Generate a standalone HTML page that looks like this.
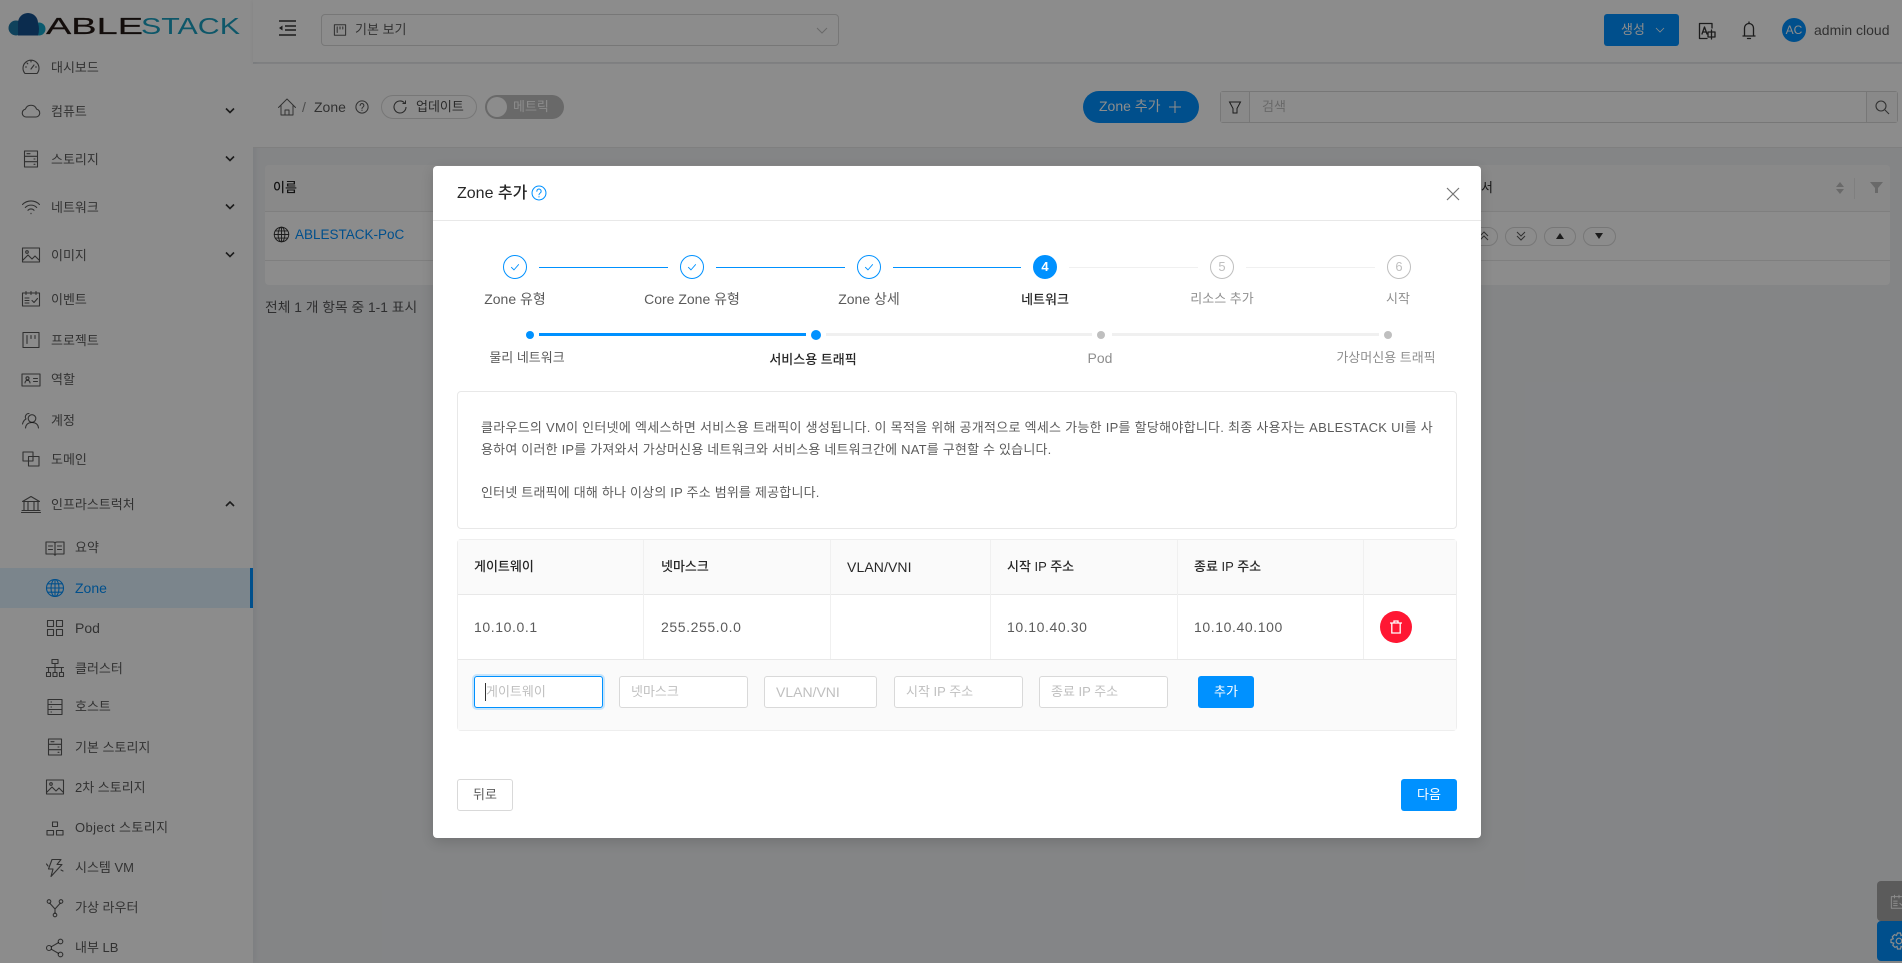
<!DOCTYPE html>
<html lang="ko"><head><meta charset="utf-8"><title>Zone</title>
<style>
*{box-sizing:border-box}
html,body{margin:0;padding:0;width:1902px;height:963px;overflow:hidden;background:#f0f2f5;font-family:"Liberation Sans","Noto Sans CJK KR",sans-serif;font-size:13px;color:rgba(0,0,0,.65)}
.a,.ic{position:absolute}
.a{white-space:nowrap}
.t{position:absolute;white-space:nowrap;line-height:22px;height:22px}
.c{transform:translateX(-50%)}
.ic{width:20px;height:20px;fill:none;stroke:currentColor;stroke-width:1.1;stroke-linecap:round;stroke-linejoin:round;overflow:visible}
.b{position:absolute;background:#fff}
.inp{position:absolute;top:676px;height:32px;border:1px solid #d9d9d9;border-radius:3px;background:#fff;color:#bfbfbf;line-height:30px;padding-left:11px;white-space:nowrap}
.step{position:absolute;top:255px;width:24px;height:24px;border-radius:50%;border:1px solid #0091ff}
.ln{position:absolute;top:267px;height:1px;background:#0091ff}
.gl{background:#f0f0f0}
.dot{position:absolute;border-radius:50%;background:#0091ff}
.v{position:absolute;width:1px;background:#f0f0f0}
.pill{position:absolute;top:227px;height:19px;border:1px solid #d9d9d9;border-radius:10px;background:#fff}
.n{font-size:14px;letter-spacing:.6px}
</style></head><body>
<svg width="0" height="0" style="position:absolute"><defs>
<symbol id="dash" viewBox="0 0 20 20"><path d="M4 16.500a8 8 0 1 1 12 0zM10 12l3-4M4.500 10h1M14.500 10h1M6 6l.8.8M10 4v1"/></symbol>
<symbol id="cloud" viewBox="0 0 20 20"><path d="M5 16a4 4 0 0 1-.6-7.900A6 6 0 0 1 15.600 8.100 4 4 0 0 1 15 16z"/></symbol>
<symbol id="stor" viewBox="0 0 20 20"><path d="M3.500 2h13v16h-13zM3.500 7.300h13M3.500 12.700h13M6 4.700h3M13 10h1M13 15.300h1"/></symbol>
<symbol id="wifi" viewBox="0 0 20 20"><path d="M1.500 7.500a12 12 0 0 1 17 0M4.300 10.500a8 8 0 0 1 11.400 0M7 13.300a4 4 0 0 1 6 0M10 16.300v.4"/></symbol>
<symbol id="img" viewBox="0 0 20 20"><path d="M1.500 3h17v14h-17zM2 15l5-5 4 4 3-3 4 4"/><circle cx="6" cy="7" r="1.300"/></symbol>
<symbol id="cal" viewBox="0 0 20 20"><path d="M1.500 4h17v13h-17zM5 2.500v3M10 2.500v3M15 2.500v3M4 9h4M4 11.500h4M4 14h4M11 11.500l2 2 3.500-4"/></symbol>
<symbol id="proj" viewBox="0 0 20 20"><path d="M2 2.500h16v15H2zM6 5.500v8M10 5.500v3M14 5.500v3"/></symbol>
<symbol id="idc" viewBox="0 0 20 20"><path d="M1 4h18v12H1zM12.500 8.500h4M12.500 11.500h4M4 13c.3-3.500 4.700-3.500 5 0"/><circle cx="6.500" cy="8.300" r="1.500"/></symbol>
<symbol id="team" viewBox="0 0 20 20"><circle cx="11" cy="8.500" r="3.800"/><path d="M4.500 18c.5-4 3-5.500 6.500-5.500s6 1.500 6.500 5.500M8 3.500A3.500 3.500 0 0 0 5 9c-2 1-3 3-3.500 5"/></symbol>
<symbol id="dom" viewBox="0 0 20 20"><path d="M2 3h10v9H2zM7.500 7.500H18V17H7.500zM12 7.500V12H7.500"/></symbol>
<symbol id="bank" viewBox="0 0 20 20"><path d="M1.500 7.500L10 2.500l8.500 5zM3 7.500V16M7 7.500V16M13 7.500V16M17 7.500V16M1 16.500h18M.5 18.500h19"/></symbol>
<symbol id="book" viewBox="0 0 20 20"><path d="M1 4h7c1 0 2 .5 2 1.500C10 4.500 11 4 12 4h7v12h-7c-1 0-2 .5-2 1.500 0-1-1-1.500-2-1.500H1zM10 5.500v12M3.500 8h4M3.500 11.500h4M12.500 8h4M12.500 11.500h4"/></symbol>
<symbol id="globe" viewBox="0 0 20 20"><circle cx="10" cy="10" r="8.500"/><ellipse cx="10" cy="10" rx="4" ry="8.500"/><path d="M10 1.500v17M1.500 10h17M2.700 5.800h14.600M2.700 14.200h14.600"/></symbol>
<symbol id="grid" viewBox="0 0 20 20"><path d="M2.500 2.500h6v6h-6zM11.500 2.500h6v6h-6zM2.500 11.500h6v6h-6zM11.500 11.500h6v6h-6z"/></symbol>
<symbol id="clu" viewBox="0 0 20 20"><path d="M7 1.500h6v4H7zM1.500 14.500h4v4h-4zM8 14.500h4v4H8zM14.500 14.500h4v4h-4zM1.500 9.500h17M3.500 14.500V9.500M10 5.500v9M16.500 14.500V9.500"/></symbol>
<symbol id="host" viewBox="0 0 20 20"><path d="M3 2.500h14v15H3zM3 7.500h14M3 12.500h14M6 5h.5M6 10h.5M6 15h.5"/></symbol>
<symbol id="obj" viewBox="0 0 20 20"><path d="M7.500 4h5v4.500h-5zM2 12.500h6.500V17H2zM11.500 12.500H18V17h-6.500z"/></symbol>
<symbol id="bolt" viewBox="0 0 20 20"><path d="M7 1.500h9l-4 5h5L6 18.500l2-7.500H3.500zM3 8L1.500 6M16 12l2 1"/></symbol>
<symbol id="fork" viewBox="0 0 20 20"><circle cx="4" cy="3.500" r="1.800"/><circle cx="16" cy="3.500" r="1.800"/><circle cx="10" cy="17" r="1.800"/><path d="M4.800 5.200L10 11l5.200-5.800M10 11v4.200"/></symbol>
<symbol id="share" viewBox="0 0 20 20"><circle cx="4" cy="10" r="2.500"/><circle cx="15.500" cy="3.500" r="2.300"/><circle cx="15.500" cy="16.500" r="2.300"/><path d="M6.200 8.800l7.300-4.200M6.200 11.200l7.300 4.200"/></symbol>
<symbol id="chk" viewBox="0 0 20 20"><path d="M4 10.500l4.300 4.300L16 6"/></symbol>
<symbol id="q" viewBox="0 0 20 20"><circle cx="10" cy="10" r="8.700"/><path d="M7.300 7.800a2.700 2.700 0 1 1 4.200 2.200c-1 .7-1.500 1.100-1.500 2.200M10 14.500v.5"/></symbol>
</defs></svg>

<!-- sidebar -->
<div class="b" style="left:0;top:0;width:253px;height:963px;box-shadow:2px 0 6px rgba(0,21,41,.06)"></div>
<svg class="a" style="left:8px;top:12px" width="240" height="26" viewBox="0 0 240 26">
<circle cx="8" cy="16" r="7.500" fill="#1d79a8"/><circle cx="31" cy="17" r="6.500" fill="#13a5c8"/><path d="M10 23.500V11a10 10 0 0 1 20 0q2 6 0 12.500z" fill="#14508f"/>
<text x="38" y="22" font-family="Liberation Sans" font-size="23.500" textLength="97" lengthAdjust="spacingAndGlyphs" fill="#231815" stroke="#231815" stroke-width=".2">ABLE</text>
<text x="133" y="22" font-family="Liberation Sans" font-size="23.500" textLength="99" lengthAdjust="spacingAndGlyphs" fill="#1b9fc0">STACK</text></svg>

<svg class="ic" style="left:21px;top:57px;color:#595959"><use href="#dash"/></svg><span class="t" style="left:51px;top:57px">대시보드</span>
<svg class="ic" style="left:21px;top:101px"><use href="#cloud"/></svg><span class="t" style="left:51px;top:101px">컴퓨트</span>
<svg class="ic" style="left:21px;top:149px"><use href="#stor"/></svg><span class="t" style="left:51px;top:149px">스토리지</span>
<svg class="ic" style="left:21px;top:197px"><use href="#wifi"/></svg><span class="t" style="left:51px;top:197px">네트워크</span>
<svg class="ic" style="left:21px;top:245px"><use href="#img"/></svg><span class="t" style="left:51px;top:245px">이미지</span>
<svg class="ic" style="left:21px;top:289px"><use href="#cal"/></svg><span class="t" style="left:51px;top:289px">이벤트</span>
<svg class="ic" style="left:21px;top:330px"><use href="#proj"/></svg><span class="t" style="left:51px;top:330px">프로젝트</span>
<svg class="ic" style="left:21px;top:370px"><use href="#idc"/></svg><span class="t" style="left:51px;top:369px">역할</span>
<svg class="ic" style="left:21px;top:410px"><use href="#team"/></svg><span class="t" style="left:51px;top:410px">계정</span>
<svg class="ic" style="left:21px;top:449px"><use href="#dom"/></svg><span class="t" style="left:51px;top:449px">도메인</span>
<svg class="ic" style="left:21px;top:494px"><use href="#bank"/></svg><span class="t" style="left:51px;top:494px">인프라스트럭처</span>
<svg class="a" style="left:225px;top:107px" width="10" height="8" fill="none" stroke="#333" stroke-width="1.600"><path d="M1 1.500l4 4 4-4"/></svg>
<svg class="a" style="left:225px;top:155px" width="10" height="8" fill="none" stroke="#333" stroke-width="1.600"><path d="M1 1.500l4 4 4-4"/></svg>
<svg class="a" style="left:225px;top:203px" width="10" height="8" fill="none" stroke="#333" stroke-width="1.600"><path d="M1 1.500l4 4 4-4"/></svg>
<svg class="a" style="left:225px;top:251px" width="10" height="8" fill="none" stroke="#333" stroke-width="1.600"><path d="M1 1.500l4 4 4-4"/></svg>
<svg class="a" style="left:225px;top:500px" width="10" height="8" fill="none" stroke="#333" stroke-width="1.600"><path d="M1 6l4-4 4 4"/></svg>

<div class="b" style="left:0;top:568px;width:253px;height:40px;background:#e0f3ff;border-right:3px solid #0091ff"></div>
<svg class="ic" style="left:45px;top:538px"><use href="#book"/></svg><span class="t" style="left:75px;top:537px">요약</span>
<svg class="ic" style="left:45px;top:578px;color:#0091ff"><use href="#globe"/></svg><span class="t" style="left:75px;top:577px;color:#0091ff;font-size:14px">Zone</span>
<svg class="ic" style="left:45px;top:618px"><use href="#grid"/></svg><span class="t" style="left:75px;top:617px;font-size:14px">Pod</span>
<svg class="ic" style="left:45px;top:658px"><use href="#clu"/></svg><span class="t" style="left:75px;top:658px">클러스터</span>
<svg class="ic" style="left:45px;top:697px"><use href="#host"/></svg><span class="t" style="left:75px;top:696px">호스트</span>
<svg class="ic" style="left:45px;top:737px"><use href="#stor"/></svg><span class="t" style="left:75px;top:737px">기본 스토리지</span>
<svg class="ic" style="left:45px;top:777px"><use href="#img"/></svg><span class="t" style="left:75px;top:777px">2차 스토리지</span>
<svg class="ic" style="left:45px;top:818px"><use href="#obj"/></svg><span class="t" style="left:75px;top:817px;letter-spacing:.4px">Object 스토리지</span>
<svg class="ic" style="left:45px;top:858px"><use href="#bolt"/></svg><span class="t" style="left:75px;top:857px">시스템 VM</span>
<svg class="ic" style="left:45px;top:898px"><use href="#fork"/></svg><span class="t" style="left:75px;top:897px">가상 라우터</span>
<svg class="ic" style="left:45px;top:938px"><use href="#share"/></svg><span class="t" style="left:75px;top:937px">내부 LB</span>

<!-- top bar -->
<div class="b" style="left:253px;top:0;width:1649px;height:62px;box-shadow:0 1px 4px rgba(0,21,41,.08)"></div>
<svg class="a" style="left:277px;top:19px" width="20" height="18" fill="none" stroke="#333" stroke-width="1.600"><path d="M2 2h17M8 7h11M8 11h11M2 16h17"/><path d="M5.500 6.500L2 9l3.500 2.500z" fill="#333" stroke="none"/></svg>
<div class="a" style="left:321px;top:14px;width:518px;height:32px;border:1px solid #d9d9d9;border-radius:4px;background:#fff"></div>
<svg class="ic" style="left:333px;top:23px;width:14px;height:14px;stroke-width:1.500"><use href="#proj"/></svg>
<span class="t" style="left:355px;top:19px">기본 보기</span>
<svg class="a" style="left:816px;top:27px" width="12" height="8" fill="none" stroke="#bfbfbf"><path d="M1 1l5 5 5-5"/></svg>
<div class="a" style="left:1604px;top:14px;width:75px;height:32px;background:#0091ff;border-radius:3px;color:#fff;line-height:31px;padding-left:17px">생성</div>
<svg class="a" style="left:1655px;top:27px" width="10" height="7" fill="none" stroke="#fff" stroke-width=".8"><path d="M1 1l4 4 4-4"/></svg>
<svg class="ic" style="left:1697px;top:21px;color:#333;stroke-width:1.300"><path d="M15 7V2.500H2.500v15H10"/><path d="M5 13l2.500-7L10 13M6 11h3M11 11h7v5h-7zM14.500 9v9"/></svg>
<svg class="ic" style="left:1739px;top:20px;color:#333;stroke-width:1.300"><path d="M10 2v1.500M5.500 16V8a4.500 4.500 0 0 1 9 0v8zM4 16h12M8.500 18.500h3"/></svg>
<div class="a" style="left:1782px;top:18px;width:24px;height:24px;border-radius:50%;background:#0091ff;color:#fff;text-align:center;font-size:12px;line-height:24px">AC</div>
<span class="t" style="left:1814px;top:19px;font-size:14px">admin cloud</span>

<!-- page header -->
<div class="b" style="left:253px;top:64px;width:1649px;height:84px;border-bottom:1px solid #e8e8e8"></div>
<svg class="ic" style="left:277px;top:97px;stroke-width:.95"><path d="M1.500 10.500L10 2l8.500 8.500M4 8.500V18h12V8.500M8 18v-5h4v5"/></svg>
<span class="t" style="left:302px;top:96px;color:#8c8c8c;font-size:14px">/</span>
<span class="t" style="left:314px;top:96px;font-size:14px">Zone</span>
<svg class="ic" style="left:355px;top:100px;width:14px;height:14px;stroke-width:1.500"><use href="#q"/></svg>
<div class="a" style="left:381px;top:95px;width:96px;height:24px;border:1px solid #d9d9d9;border-radius:12px;background:#fff;line-height:22px;padding-left:34px;color:#4d4d4d">업데이트</div>
<svg class="a" style="left:393px;top:100px" width="14" height="14" fill="none" stroke="#4d4d4d" stroke-width="1.100"><path d="M11.500 3A6 6 0 1 0 13 7"/><path d="M12.500 .5V3.500h-3" stroke-width="1"/></svg>
<div class="a" style="left:485px;top:95px;width:79px;height:24px;border-radius:12px;background:#bfbfbf;color:#fff;line-height:23px;padding-left:28px">메트릭</div>
<div class="a" style="left:487px;top:97px;width:20px;height:20px;border-radius:50%;background:#fff"></div>
<div class="a" style="left:1083px;top:91px;width:116px;height:32px;border-radius:16px;background:#0091ff;color:#fff;line-height:31px;padding-left:16px;font-size:14px">Zone 추가</div>
<svg class="a" style="left:1168px;top:100px" width="14" height="14" stroke="#fff" stroke-width="1.100"><path d="M7 1v12M1 7h12"/></svg>
<div class="a" style="left:1220px;top:91px;width:678px;height:32px;border:1px solid #d9d9d9;border-radius:3px;background:#fff;color:#bfbfbf;line-height:30px;padding-left:41px">검색</div>
<div class="a" style="left:1221px;top:92px;width:29px;height:30px;background:#fafafa;border-right:1px solid #d9d9d9"></div>
<div class="a" style="left:1866px;top:92px;width:31px;height:30px;background:#fafafa;border-left:1px solid #d9d9d9"></div>
<svg class="a" style="left:1228px;top:100px" width="14" height="15" fill="none" stroke="#333" stroke-width="1"><path d="M1.500 2h11L9 8.500V13H5V8.500z"/></svg>
<svg class="a" style="left:1875px;top:100px" width="15" height="15" fill="none" stroke="#595959" stroke-width="1.100"><circle cx="6" cy="6" r="5"/><path d="M10 10l4 4"/></svg>

<!-- table -->
<div class="b" style="left:265px;top:165px;width:1625px;height:120px;border-radius:4px"></div>
<div class="a" style="left:265px;top:165px;width:1625px;height:47px;background:#fafafa;border-bottom:1px solid #e8e8e8;border-radius:4px 4px 0 0"></div>
<div class="a" style="left:265px;top:260px;width:1625px;height:1px;background:#e8e8e8"></div>
<span class="t" style="left:273px;top:177px;color:rgba(0,0,0,.85);font-weight:500">이름</span>
<svg class="ic" style="left:273px;top:226px;width:17px;height:17px;color:#333"><use href="#globe"/></svg>
<span class="t" style="left:295px;top:224px;color:#0091ff;font-size:13.500px">ABLESTACK-PoC</span>
<span class="t" style="left:265px;top:297px;font-size:13.800px">전체 1 개 항목 중 1-1 표시</span>
<span class="t" style="left:1481px;top:177px;color:rgba(0,0,0,.85)">서</span>
<svg class="a" style="left:1835px;top:181px" width="10" height="14" fill="#bfbfbf"><path d="M5 1l4 5H1zM5 13L1 8h8z"/></svg>
<div class="a" style="left:1854px;top:178px;width:1px;height:21px;background:#e8e8e8"></div>
<svg class="a" style="left:1870px;top:181px" width="13" height="13" fill="#bfbfbf"><path d="M0 1h13L8 7v5H5V7z"/></svg>
<div class="pill" style="left:1470px;width:28px"></div>
<div class="pill" style="left:1505px;width:32px"></div>
<div class="pill" style="left:1544px;width:32px"></div>
<div class="pill" style="left:1583px;width:33px"></div>
<svg class="a" style="left:1478px;top:231px" width="12" height="11" fill="none" stroke="#595959"><path d="M2 5l4-4 4 4M2 9l4-4 4 4"/></svg>
<svg class="a" style="left:1515px;top:231px" width="12" height="11" fill="none" stroke="#595959"><path d="M2 1l4 4 4-4M2 5l4 4 4-4"/></svg>
<svg class="a" style="left:1555px;top:232px" width="10" height="8" fill="#333"><path d="M5 1l4 6H1z"/></svg>
<svg class="a" style="left:1594px;top:232px" width="10" height="8" fill="#333"><path d="M5 7L1 1h8z"/></svg>

<div class="a" style="left:1877px;top:881px;width:25px;height:40px;background:#a6a6a6;border-radius:4px 0 0 4px"></div>
<svg class="ic" style="left:1890px;top:893px;color:#fff;width:18px;height:18px"><use href="#cal"/></svg>
<div class="a" style="left:1877px;top:921px;width:25px;height:40px;background:#0091ff;border-radius:4px 0 0 4px"></div>
<svg class="a" style="left:1890px;top:932px" width="18" height="18" fill="none" stroke="#fff" stroke-width="1.200"><circle cx="9" cy="9" r="2.800"/><path d="M7.500 1h3l.5 2.500 2-.9 2.200 2.200-1 2 2.500.7v3l-2.500.7 1 2-2.200 2.200-2-1-.5 2.600h-3l-.5-2.600-2 1-2.200-2.200 1-2L1 10.500v-3l2.300-.7-1-2 2.200-2.200 2 .9z"/></svg>

<!-- overlay -->
<div class="a" style="left:0;top:0;width:1902px;height:963px;background:rgba(0,0,0,.45)"></div>

<!-- modal -->
<div class="b" style="left:433px;top:166px;width:1048px;height:672px;border-radius:4px;box-shadow:0 4px 12px rgba(0,0,0,.15)"></div>
<div class="a" style="left:433px;top:220px;width:1048px;height:1px;background:#e8e8e8"></div>
<span class="t" style="left:457px;top:183px;color:rgba(0,0,0,.85);font-size:16px;font-weight:500">Zone 추가</span>
<svg class="ic" style="left:531px;top:185px;width:16px;height:16px;color:#0091ff;stroke-width:1.300"><use href="#q"/></svg>
<svg class="a" style="left:1446px;top:187px" width="14" height="14" fill="none" stroke="#737373" stroke-width="1.200"><path d="M1 1l12 12M13 1L1 13"/></svg>

<div class="step" style="left:503px"></div><svg class="ic" style="left:509px;top:261px;width:12px;height:12px;color:#0091ff;stroke-width:1.500"><use href="#chk"/></svg>
<div class="step" style="left:680px"></div><svg class="ic" style="left:686px;top:261px;width:12px;height:12px;color:#0091ff;stroke-width:1.500"><use href="#chk"/></svg>
<div class="step" style="left:857px"></div><svg class="ic" style="left:863px;top:261px;width:12px;height:12px;color:#0091ff;stroke-width:1.500"><use href="#chk"/></svg>
<div class="step" style="left:1033px;background:#0091ff;color:#fff;text-align:center;font-size:13px;font-weight:700;line-height:22px">4</div>
<div class="step" style="left:1210px;border-color:#bfbfbf;color:#bfbfbf;text-align:center;font-size:13px;line-height:22px">5</div>
<div class="step" style="left:1387px;border-color:#bfbfbf;color:#bfbfbf;text-align:center;font-size:13px;line-height:22px">6</div>
<div class="ln" style="left:539px;width:129px"></div><div class="ln" style="left:716px;width:129px"></div><div class="ln" style="left:893px;width:128px"></div>
<div class="ln gl" style="left:1069px;width:129px"></div><div class="ln gl" style="left:1246px;width:129px"></div>
<span class="t c" style="left:515px;top:288px;font-size:14px">Zone 유형</span>
<span class="t c" style="left:692px;top:288px;font-size:14px">Core Zone 유형</span>
<span class="t c" style="left:869px;top:288px;font-size:14px">Zone 상세</span>
<span class="t c" style="left:1045px;top:289px;font-size:13px;color:rgba(0,0,0,.85);font-weight:500">네트워크</span>
<span class="t c" style="left:1222px;top:288px;color:rgba(0,0,0,.45)">리소스 추가</span>
<span class="t c" style="left:1398px;top:288px;color:rgba(0,0,0,.45)">시작</span>

<div class="dot" style="left:526px;top:331px;width:8px;height:8px"></div>
<div class="a" style="left:539px;top:333px;width:267px;height:3px;background:#0091ff"></div>
<div class="dot" style="left:811px;top:330px;width:10px;height:10px"></div>
<div class="a" style="left:826px;top:333px;width:266px;height:3px;background:#f0f0f0"></div>
<div class="dot" style="left:1097px;top:331px;width:8px;height:8px;background:#bfbfbf"></div>
<div class="a" style="left:1112px;top:333px;width:267px;height:3px;background:#f0f0f0"></div>
<div class="dot" style="left:1384px;top:331px;width:8px;height:8px;background:#bfbfbf"></div>
<span class="t c" style="left:527px;top:347px">물리 네트워크</span>
<span class="t c" style="left:813px;top:349px;color:rgba(0,0,0,.85);font-weight:500">서비스용 트래픽</span>
<span class="t c" style="left:1100px;top:347px;color:rgba(0,0,0,.45);font-size:14px">Pod</span>
<span class="t c" style="left:1386px;top:347px;color:rgba(0,0,0,.45)">가상머신용 트래픽</span>

<div class="a" style="left:457px;top:391px;width:1000px;height:138px;border:1px solid #e8e8e8;border-radius:4px"></div>
<span class="t" style="left:481px;top:417px;letter-spacing:.27px">클라우드의 VM이 인터넷에 엑세스하면 서비스용 트래픽이 생성됩니다. 이 목적을 위해 공개적으로 엑세스 가능한 IP를 할당해야합니다. 최종 사용자는 ABLESTACK UI를 사</span>
<span class="t" style="left:481px;top:439px;letter-spacing:.2px">용하여 이러한 IP를 가져와서 가상머신용 네트워크와 서비스용 네트워크간에 NAT를 구현할 수 있습니다.</span>
<span class="t" style="left:481px;top:482px;letter-spacing:.2px">인터넷 트래픽에 대해 하나 이상의 IP 주소 범위를 제공합니다.</span>

<div class="a" style="left:457px;top:539px;width:1000px;height:192px;border:1px solid #eee;border-radius:4px"></div>
<div class="a" style="left:458px;top:540px;width:998px;height:55px;background:#fafafa;border-bottom:1px solid #e8e8e8"></div>
<div class="a" style="left:458px;top:659px;width:998px;height:71px;background:#fafafa;border-top:1px solid #e8e8e8"></div>
<div class="v" style="left:643px;top:540px;height:119px"></div>
<div class="v" style="left:830px;top:540px;height:119px"></div>
<div class="v" style="left:990px;top:540px;height:119px"></div>
<div class="v" style="left:1177px;top:540px;height:119px"></div>
<div class="v" style="left:1363px;top:540px;height:119px"></div>
<span class="t" style="left:474px;top:556px;color:rgba(0,0,0,.85);font-weight:500">게이트웨이</span>
<span class="t" style="left:661px;top:556px;color:rgba(0,0,0,.85);font-weight:500">넷마스크</span>
<span class="t" style="left:847px;top:556px;color:rgba(0,0,0,.85);font-size:14px;letter-spacing:.1px">VLAN/VNI</span>
<span class="t" style="left:1007px;top:556px;color:rgba(0,0,0,.85);font-weight:500">시작 IP 주소</span>
<span class="t" style="left:1194px;top:556px;color:rgba(0,0,0,.85);font-weight:500">종료 IP 주소</span>
<span class="t n" style="left:474px;top:616px">10.10.0.1</span>
<span class="t n" style="left:661px;top:616px">255.255.0.0</span>
<span class="t n" style="left:1007px;top:616px">10.10.40.30</span>
<span class="t n" style="left:1194px;top:616px">10.10.40.100</span>
<div class="a" style="left:1380px;top:611px;width:32px;height:32px;border-radius:50%;background:#ff1733"></div>
<svg class="a" style="left:1389px;top:620px" width="14" height="14" fill="none" stroke="#fff" stroke-width="1.300"><path d="M1 3h12M5 3V1h4v2M2.800 3v10h8.400V3"/></svg>

<div class="inp" style="left:474px;width:129px;border-color:#0091ff;box-shadow:0 0 0 2px rgba(0,145,255,.2)">게이트웨이</div>
<div class="a" style="left:485px;top:683px;width:1px;height:18px;background:#333"></div>
<div class="inp" style="left:619px;width:129px">넷마스크</div>
<div class="inp" style="left:764px;width:113px;font-size:14px">VLAN/VNI</div>
<div class="inp" style="left:894px;width:129px">시작 IP 주소</div>
<div class="inp" style="left:1039px;width:129px">종료 IP 주소</div>
<div class="a" style="left:1198px;top:676px;width:56px;height:32px;background:#0091ff;border-radius:3px;color:#fff;text-align:center;line-height:31px">추가</div>
<div class="a" style="left:457px;top:779px;width:56px;height:32px;border:1px solid #d9d9d9;border-radius:3px;background:#fff;text-align:center;line-height:30px">뒤로</div>
<div class="a" style="left:1401px;top:779px;width:56px;height:32px;background:#0091ff;border-radius:3px;color:#fff;text-align:center;line-height:31px">다음</div>
</body></html>
